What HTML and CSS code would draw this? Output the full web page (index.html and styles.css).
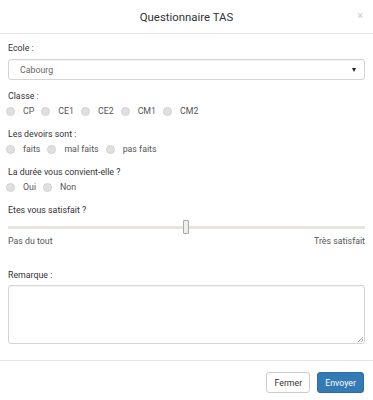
FILE: index.html
```html
<!DOCTYPE html>
<html lang="fr">
<head>
  <meta charset="UTF-8"/>
  <meta name="viewport" content="width=device-width, initial-scale=1.0"/>
  <title>Questionnaire TAS</title>
  <link rel="stylesheet" href="styles.css">
</head>
<body>

  <div class="modal">
    <div class="modal-header">
      <h4 class="modal-title">Questionnaire TAS</h4>
      <span class="close">&times;</span>
    </div>

    <form class="modal-body">
      <div class="group">
        <label class="label">Ecole :</label>
        <div class="select">
          <span>Cabourg</span>
          <span class="caret"></span>
        </div>
      </div>

      <div class="group">
        <label class="label">Classe :</label>
        <div class="radios">
          <span class="radio"><i></i>CP</span>
          <span class="radio"><i></i>CE1</span>
          <span class="radio"><i></i>CE2</span>
          <span class="radio"><i></i>CM1</span>
          <span class="radio"><i></i>CM2</span>
        </div>
      </div>

      <div class="group">
        <label class="label">Les devoirs sont :</label>
        <div class="radios">
          <span class="radio"><i></i>faits</span>
          <span class="radio"><i></i>mal faits</span>
          <span class="radio"><i></i>pas faits</span>
        </div>
      </div>

      <div class="group">
        <label class="label">La durée vous convient-elle ?</label>
        <div class="radios">
          <span class="radio"><i></i>Oui</span>
          <span class="radio"><i></i>Non</span>
        </div>
      </div>

      <div class="group">
        <label class="label">Etes vous satisfait ?</label>
        <div class="slider">
          <div class="track"></div>
          <span class="thumb"></span>
        </div>
        <div class="scale">
          <span>Pas du tout</span>
          <span>Très satisfait</span>
        </div>
      </div>

      <div class="group remark">
        <label class="label">Remarque :</label>
        <div class="textarea"><span class="grip"></span></div>
      </div>
    </form>

    <div class="modal-footer">
      <button type="button" class="btn">Fermer</button>
      <button type="button" class="btn btn-primary">Envoyer</button>
    </div>
  </div>

</body>
</html>
```

FILE: styles.css
```css
body {
  margin: 0;
  font-family: Roboto, "Liberation Sans", Arial, sans-serif;
  font-size: 8.8px;
  color: #333;
  background: #fff;
}

.modal {
  width: 373px;
  height: 400px;
  background: #fff;
}

.modal-header {
  height: 33px;
  border-bottom: 1px solid #e5e5e5;
  display: flex;
  align-items: center;
  justify-content: center;
  position: relative;
}

.modal-title {
  margin: 0;
  font-size: 11.4px;
  font-weight: normal;
  color: #333;
}

.close {
  position: absolute;
  right: 10px;
  top: 9px;
  font-size: 11px;
  color: #c8c8c8;
}

.modal-body {
  padding: 7px 8px 16px;
}

.group {
  margin-bottom: 9px;
}

.label {
  display: block;
  line-height: 14px;
  color: #333;
}

.select {
  margin-top: 4px;
  height: 19px;
  border: 1px solid #d4d4d4;
  border-radius: 3px;
  display: flex;
  align-items: center;
  justify-content: space-between;
  padding: 0 8px 0 11px;
  color: #666;
  box-shadow: inset 0 1px 1px rgba(0,0,0,0.05);
}

.caret {
  width: 0;
  height: 0;
  border-left: 2.5px solid transparent;
  border-right: 2.5px solid transparent;
  border-top: 4px solid #222;
}

.radios {
  margin-top: 1px;
  display: flex;
  gap: 9px;
  line-height: 14px;
  color: #555;
}

.radio {
  display: flex;
  align-items: center;
}

.radio i {
  width: 7px;
  height: 7px;
  border-radius: 50%;
  background: #e0e0e0;
  border: 0.5px solid #d2d2d2;
  margin: 0 8px 0 -2px;
}

.slider {
  position: relative;
  height: 14px;
  margin-top: 3px;
  display: flex;
  align-items: center;
}

.track {
  flex: 1;
  height: 3px;
  background: #e8e4df;
}

.thumb {
  position: absolute;
  left: 175px;
  top: 0;
  width: 4px;
  height: 12px;
  border: 1px solid #a9a9a9;
  background: #eee;
  border-radius: 1px;
}

.scale {
  display: flex;
  justify-content: space-between;
  line-height: 14px;
  color: #555;
}

.remark {
  margin-top: 20px;
  margin-bottom: 0;
}

.textarea {
  margin-top: 3px;
  height: 57px;
  border: 1px solid #d4d4d4;
  border-radius: 3px;
  position: relative;
  box-shadow: inset 0 1px 1px rgba(0,0,0,0.05);
}

.grip {
  position: absolute;
  right: 1px;
  bottom: 1px;
  width: 5px;
  height: 5px;
  background: linear-gradient(135deg, transparent 45%, #aaa 45%, #aaa 55%, transparent 55%, transparent 70%, #aaa 70%, #aaa 80%, transparent 80%);
}

.modal-footer {
  border-top: 1px solid #e5e5e5;
  padding: 11px 9px 0;
  display: flex;
  justify-content: flex-end;
  gap: 7px;
}

.btn {
  height: 21px;
  padding: 0 7px;
  font-family: Roboto, "Liberation Sans", Arial, sans-serif;
  font-size: 8.8px;
  color: #333;
  background: #fff;
  border: 1px solid #ccc;
  border-radius: 3px;
}

.btn-primary {
  color: #fff;
  background: #337ab7;
  border-color: #2e6da4;
}
```
